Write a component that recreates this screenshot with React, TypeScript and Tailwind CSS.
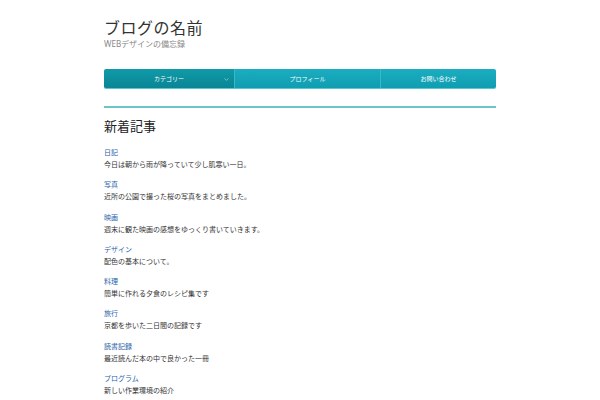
import React from "react";
import { ChevronDown } from "lucide-react";

const posts = [
  { cat: "日記", text: "今日は朝から雨が降っていて少し肌寒い一日。" },
  { cat: "写真", text: "近所の公園で撮った桜の写真をまとめました。" },
  { cat: "映画", text: "週末に観た映画の感想をゆっくり書いていきます。" },
  { cat: "デザイン", text: "配色の基本について。" },
  { cat: "料理", text: "簡単に作れる夕食のレシピ集です" },
  { cat: "旅行", text: "京都を歩いた二日間の記録です" },
  { cat: "読書記録", text: "最近読んだ本の中で良かった一冊" },
  { cat: "プログラム", text: "新しい作業環境の紹介" },
];

const navItems = [
  { label: "カテゴリー", w: "w-[130px]", dark: true },
  { label: "プロフィール", w: "w-[146px]", dark: false },
  { label: "お問い合わせ", w: "flex-1", dark: false },
];

export default function App() {
  return (
    <div className="min-h-[400px] bg-white font-['Noto_Sans','Noto_Sans_CJK_JP',sans-serif] text-[#333]">
      <div className="mx-auto w-[392px] pt-[18px]">
        <header>
          <h1 className="text-[16px] leading-[20px] tracking-[0.5px] text-[#333]">
            ブログの名前
          </h1>
          <p className="text-[8px] leading-[12px] text-[#888]">WEBデザインの備忘録</p>
        </header>

        <nav className="mt-[19px] flex h-[20px] overflow-hidden rounded-[2px] border-b border-[#58c6d3]">
          {navItems.map((item) => (
            <div
              key={item.label}
              className={`relative flex items-center justify-center ${item.w} ${
                item.dark
                  ? "bg-gradient-to-b from-[#109aa8] to-[#0a8594]"
                  : "border-l border-[#3bb8c8] bg-gradient-to-b from-[#1badc0] to-[#0f9db1]"
              }`}
            >
              <span className="text-[6px] leading-none text-white">{item.label}</span>
              {item.dark && (
                <ChevronDown
                  size={7}
                  strokeWidth={2}
                  className="absolute right-[4px] top-[7px] text-[#b8e6ec]"
                />
              )}
            </div>
          ))}
        </nav>

        <div className="mt-[17px] h-[2px] bg-[#6cc5c3]" />

        <h2 className="mt-[10px] text-[13px] leading-[16px] text-[#222]">新着記事</h2>

        <ul className="mt-[13px] flex flex-col gap-[8.3px]">
          {posts.map((p) => (
            <li key={p.cat} className="flex flex-col">
              <a className="text-[7px] leading-[12px] text-[#1f5fa8]">{p.cat}</a>
              <p className="text-[7px] leading-[12px] text-[#333]">{p.text}</p>
            </li>
          ))}
        </ul>
      </div>
    </div>
  );
}
